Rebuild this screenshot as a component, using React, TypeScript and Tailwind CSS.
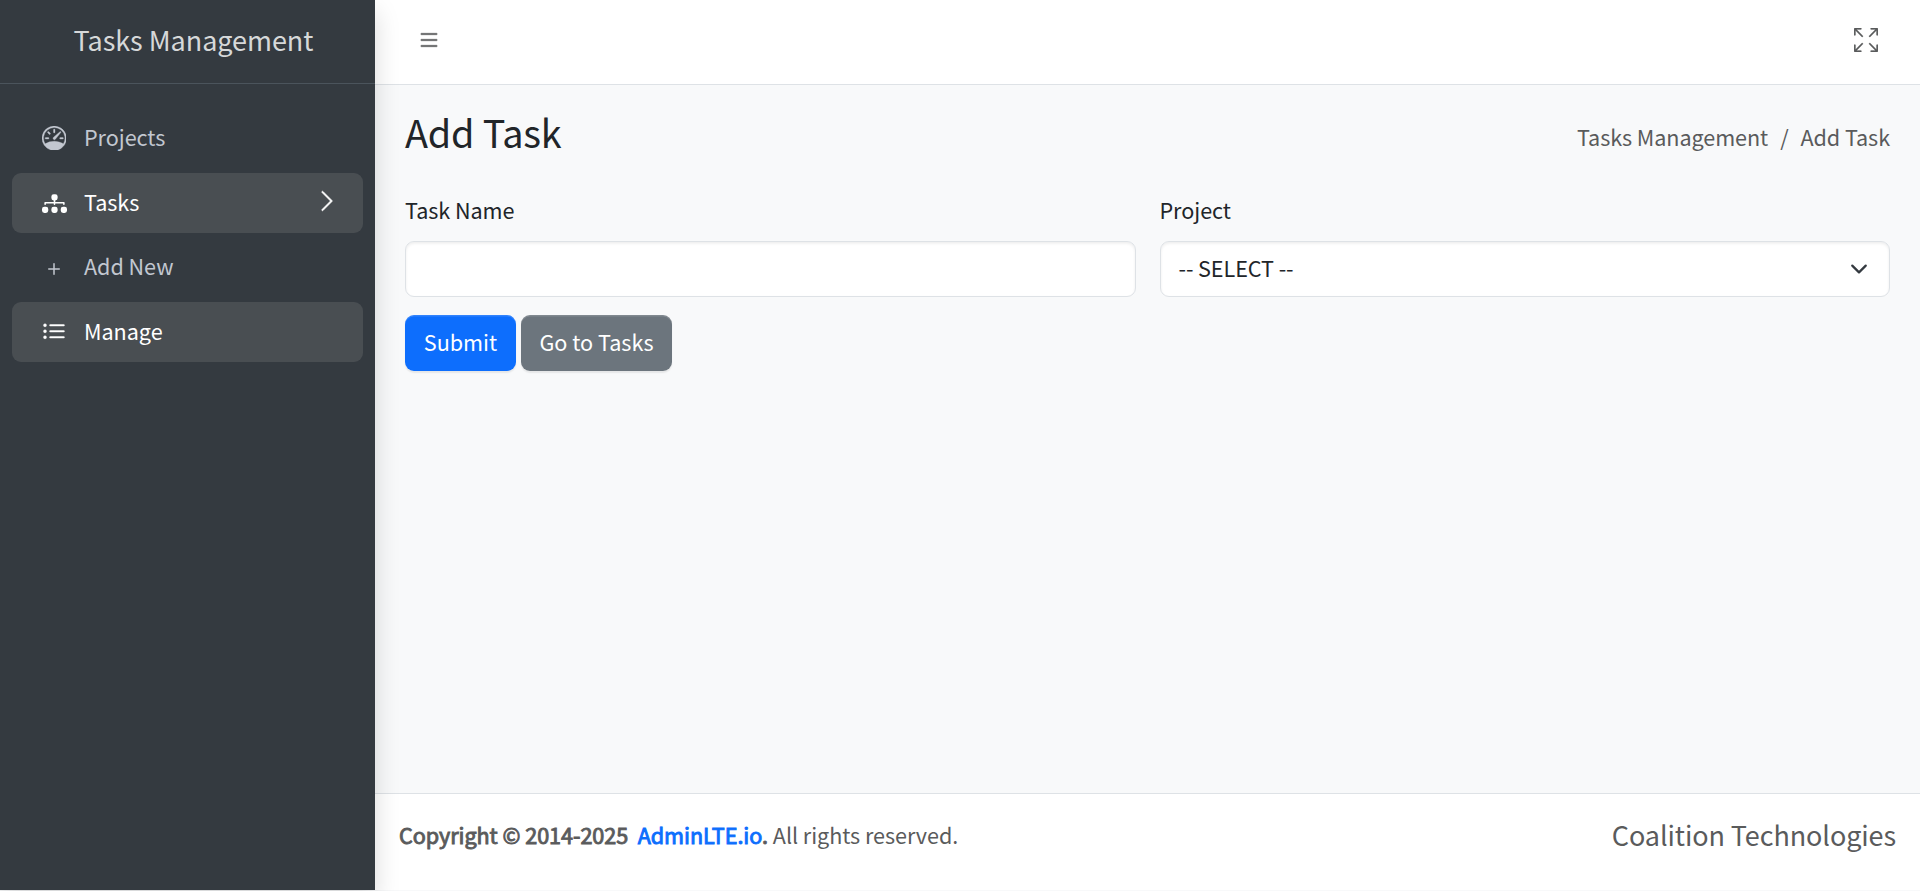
import type { ReactNode } from "react";
import { BsSpeedometer, BsDiagram3Fill, BsPlus, BsListUl, BsChevronRight, BsList, BsArrowsFullscreen } from "react-icons/bs";

function NavItem({ icon, label, active, arrow }: { icon: ReactNode; label: string; active?: boolean; arrow?: boolean }) {
  return (
    <li>
      <a
        href="#"
        className={
          active
            ? "flex h-[60px] items-center rounded-[9px] bg-[#494e52] pr-6 pl-[29.5px] text-white"
            : "flex h-[60px] items-center rounded-[9px] pr-6 pl-[29.5px] text-[#c2c7d0]"
        }
      >
        <span className="flex w-[25px] justify-center">{icon}</span>
        <span className="ml-[17.5px] grow pb-[3px] leading-9 tracking-[-0.05px]">{label}</span>
        {arrow && <BsChevronRight className="mb-1 size-6" strokeWidth={0.4} />}
      </a>
    </li>
  );
}

export default function App() {
  return (
    <div className="flex h-[891px] bg-[#f8f9fa] font-['Noto_Sans_CJK_SC','Noto_Sans',sans-serif] text-[21.6px] leading-9 text-[#212529]">
      <aside className="relative mb-px flex w-[375px] shrink-0 flex-col bg-[#343a40] shadow-[0_12px_24px_rgba(0,0,0,0.15)]">
        <div className="flex h-[84px] items-center justify-center border-b border-[#4b545c] pb-[3px] pl-[12px] text-[27px] text-[#d6d8d9]">
          <span className="tracking-[-0.05px]">Tasks Management</span>
        </div>
        <ul className="flex flex-col gap-[4.5px] px-3 pt-[24.5px]">
          <NavItem icon={<BsSpeedometer className="mb-px size-[24.5px]" strokeWidth={0.2} />} label="Projects" />
          <NavItem icon={<BsDiagram3Fill className="size-[25px]" />} label="Tasks" active arrow />
          <NavItem icon={<BsPlus className="mt-0.5 size-6" />} label="Add New" />
          <NavItem icon={<BsListUl className="mb-px size-6" strokeWidth={0.3} />} label="Manage" active />
        </ul>
      </aside>

      <div className="flex grow flex-col">
        <nav className="flex h-[85px] items-center justify-between border-b border-[#dee2e6] bg-white px-[42px] text-[#5a5b5c]">
          <BsList className="mb-1 size-6" strokeWidth={0.3} />
          <BsArrowsFullscreen className="mb-1 size-6" strokeWidth={0.2} />
        </nav>

        <main className="grow px-[30px]">
          <div className="flex items-start justify-between pt-[22px]">
            <h3 className="text-[37.8px] leading-[50px] tracking-[-0.15px]">Add Task</h3>
            <ol className="mt-3 flex tracking-[-0.08px] text-[#5a5b5c]">
              <li>Tasks Management</li>
              <li className="px-3">/</li>
              <li>Add Task</li>
            </ol>
          </div>

          <form>
            <div className="mt-[35px] grid grid-cols-2 gap-6">
              <div>
                <label className="mb-[13px] block tracking-[-0.05px]">Task Name</label>
                <input
                  type="text"
                  className="block h-14 w-full rounded-[9px] border border-[#dee2e6] bg-white shadow-[inset_0_1.5px_3px_rgba(0,0,0,0.075)]"
                />
              </div>
              <div>
                <label className="mb-[13px] block tracking-[-0.05px]">Project</label>
                <div className="flex h-14 items-center justify-between rounded-[9px] border border-[#dee2e6] bg-white px-[18px] shadow-[inset_0_1.5px_3px_rgba(0,0,0,0.075)]">
                  <span className="pb-[3px] tracking-[-0.08px]">-- SELECT --</span>
                  <svg viewBox="0 0 16 16" className="h-[18px] w-6" fill="none" stroke="#343a40" strokeWidth="2" strokeLinecap="round" strokeLinejoin="round">
                    <path d="m2 5 6 6 6-6" />
                  </svg>
                </div>
              </div>
            </div>
            <div className="mt-[18px] flex gap-[5px] text-white">
              <button
                type="button"
                className="h-14 w-[111px] rounded-[9px] bg-[#0d6efd] pb-[3px] shadow-[inset_0_1.5px_0_rgba(255,255,255,0.15),0_1.5px_1.5px_rgba(0,0,0,0.075)]"
              >
                Submit
              </button>
              <button
                type="button"
                className="h-14 w-[151px] rounded-[9px] bg-[#6c757d] pb-[3px] shadow-[inset_0_1.5px_0_rgba(255,255,255,0.15),0_1.5px_1.5px_rgba(0,0,0,0.075)]"
              >
                Go to Tasks
              </button>
            </div>
          </form>
        </main>

        <footer className="mb-px flex h-[97px] items-center justify-between border-t border-[#dee2e6] bg-white px-6 pb-[15px] text-[#5a5b5c]">
          <p className="tracking-[-0.05px]">
            <strong className="font-normal [-webkit-text-stroke:0.9px_currentColor]">
              Copyright © 2014-2025&nbsp; <a href="#" className="text-[#0d6efd]">AdminLTE.io</a>.
            </strong>{" "}
            All rights reserved.
          </p>
          <p className="text-[27px] tracking-[-0.1px]">Coalition Technologies</p>
        </footer>
      </div>
    </div>
  );
}
